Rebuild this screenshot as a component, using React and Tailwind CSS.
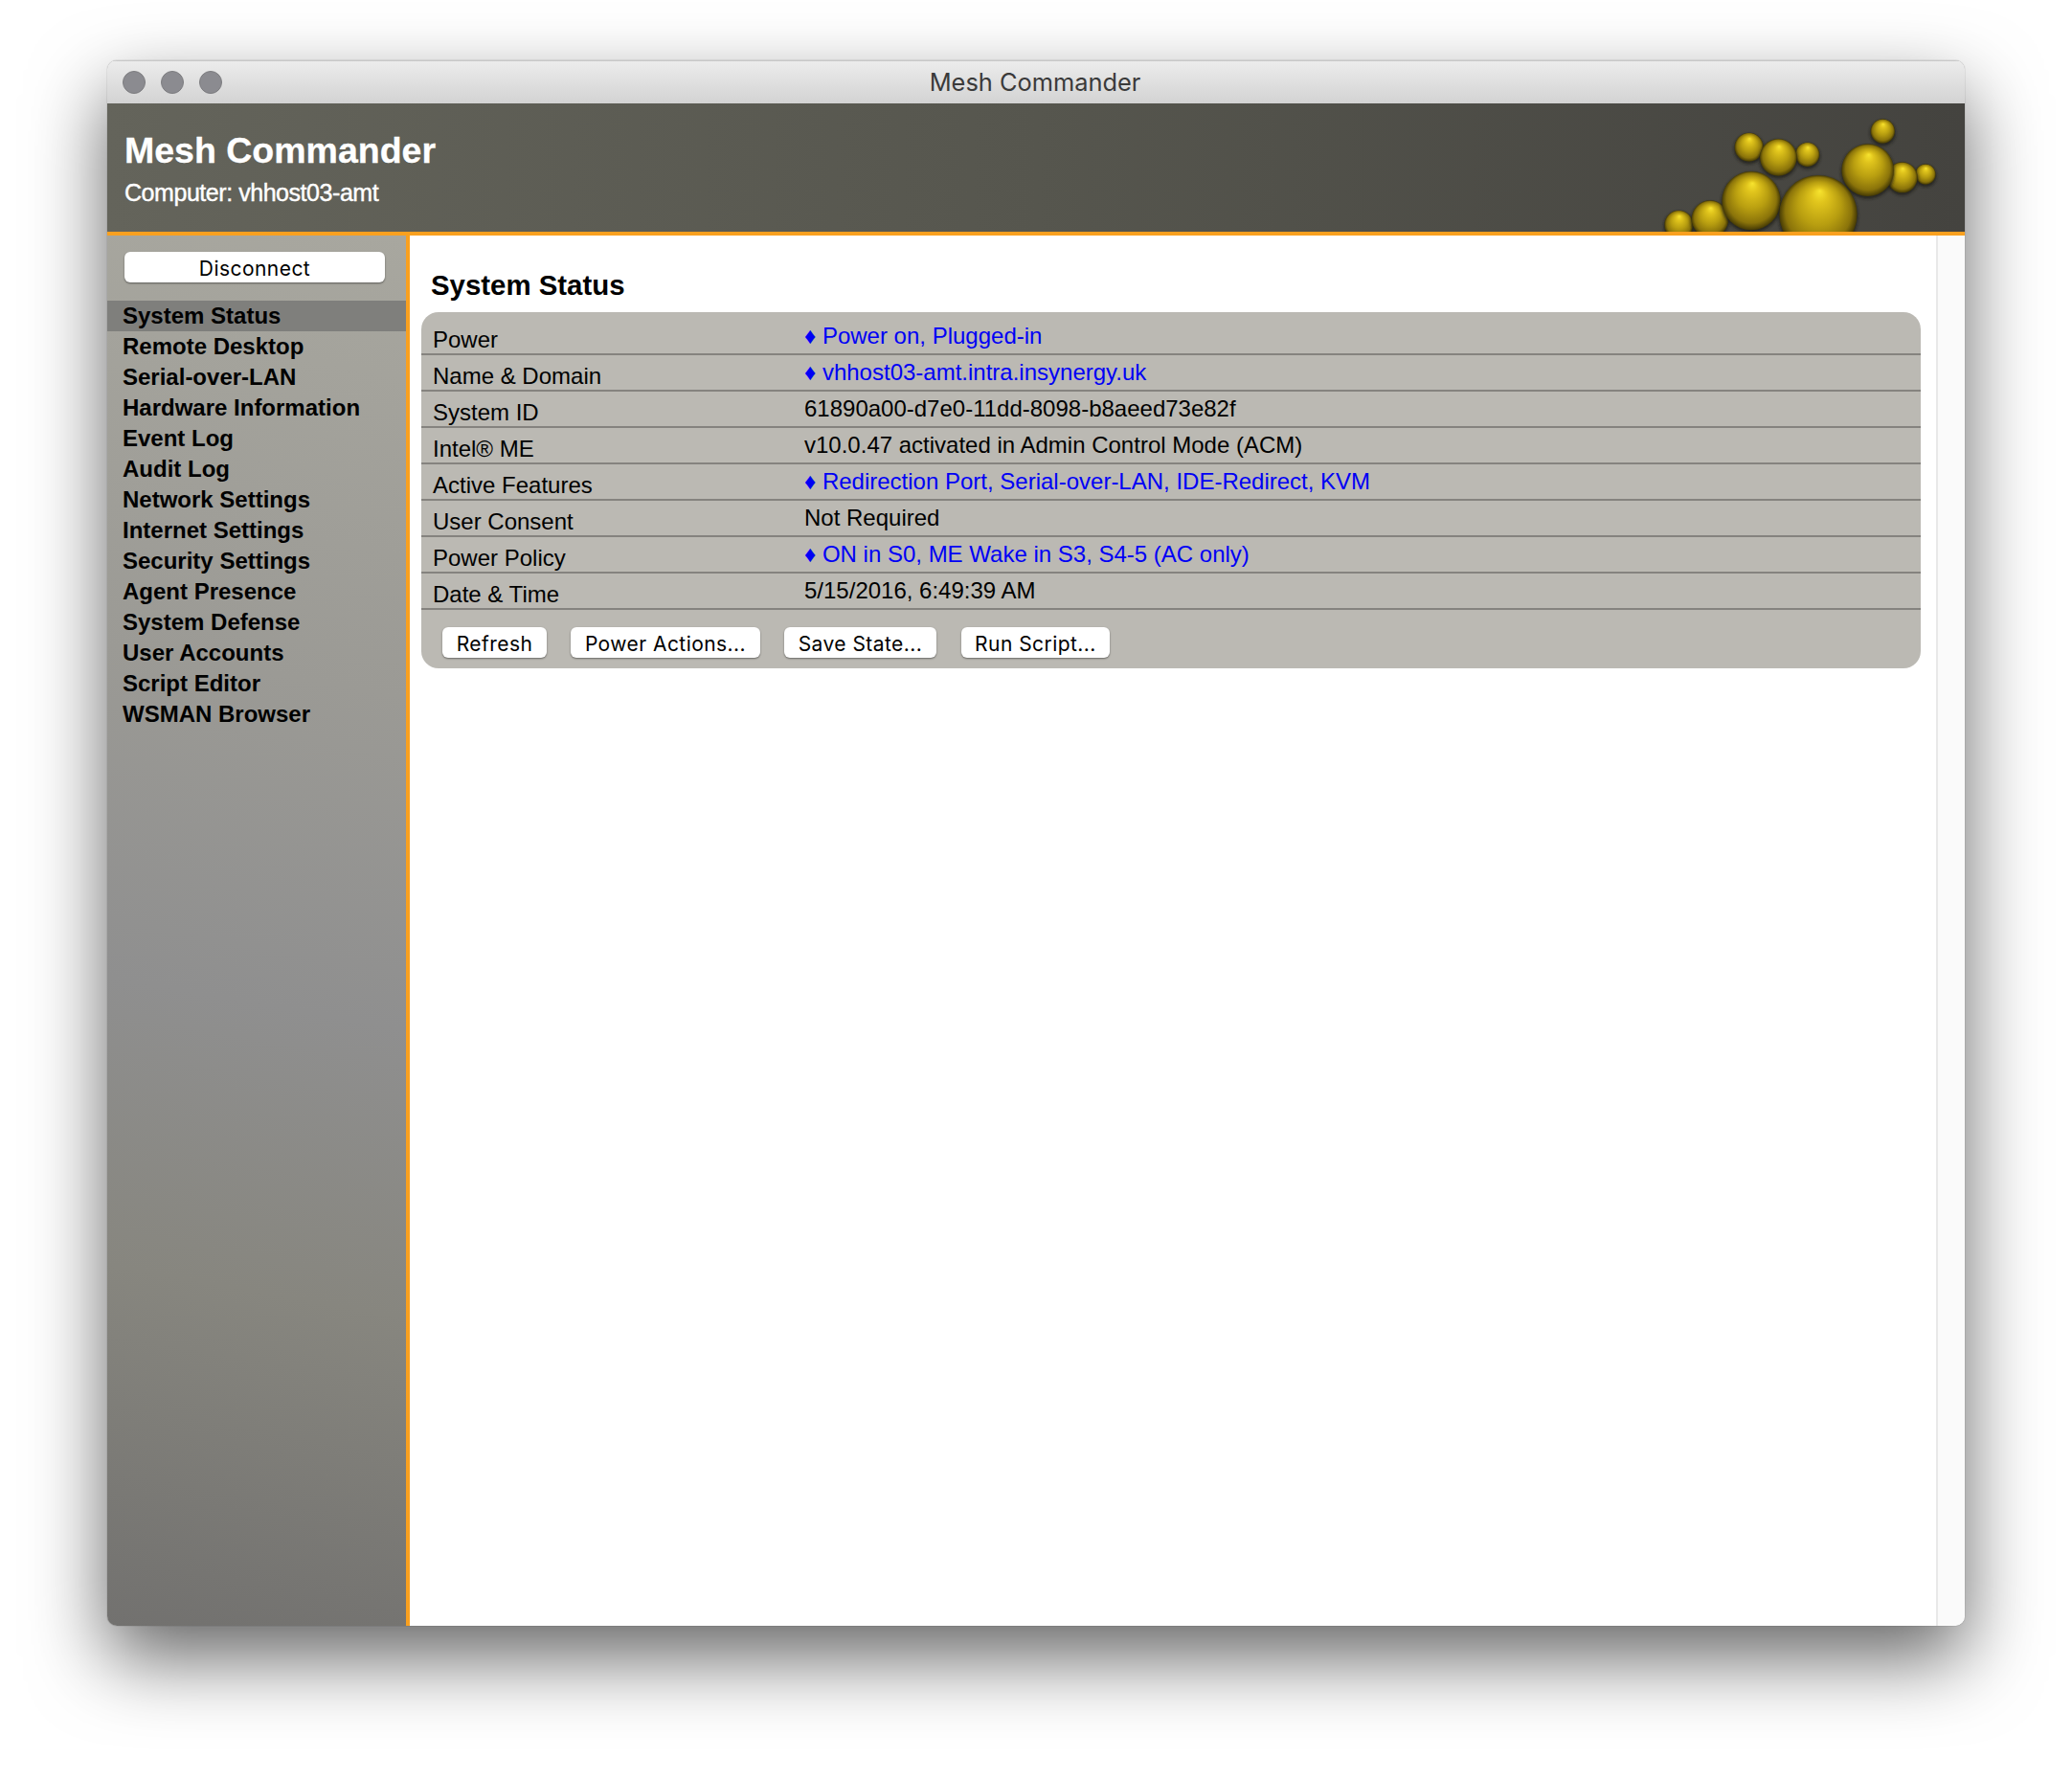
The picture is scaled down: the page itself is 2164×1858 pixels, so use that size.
const menuItems = [
  'System Status',
  'Remote Desktop',
  'Serial-over-LAN',
  'Hardware Information',
  'Event Log',
  'Audit Log',
  'Network Settings',
  'Internet Settings',
  'Security Settings',
  'Agent Presence',
  'System Defense',
  'User Accounts',
  'Script Editor',
  'WSMAN Browser',
];

const statusRows = [
  { label: 'Power', value: 'Power on, Plugged-in', link: true },
  { label: 'Name & Domain', value: 'vhhost03-amt.intra.insynergy.uk', link: true },
  { label: 'System ID', value: '61890a00-d7e0-11dd-8098-b8aeed73e82f' },
  { label: 'Intel® ME', value: 'v10.0.47 activated in Admin Control Mode (ACM)' },
  { label: 'Active Features', value: 'Redirection Port, Serial-over-LAN, IDE-Redirect, KVM', link: true },
  { label: 'User Consent', value: 'Not Required' },
  { label: 'Power Policy', value: 'ON in S0, ME Wake in S3, S4-5 (AC only)', link: true },
  { label: 'Date & Time', value: '5/15/2016, 6:49:39 AM' },
];

const balls = [
  [160, 553, 45],
  [258, 535, 58],
  [380, 310, 45],
  [563, 333, 38],
  [472, 342, 58],
  [387, 478, 92],
  [799, 260, 38],
  [933, 395, 32],
  [860, 405, 48],
  [752, 382, 82],
  [597, 520, 122],
];

const Logo = () => (
  <svg className="absolute right-0 bottom-0 w-[352px] h-[134px]" viewBox="0 173 1056 402">
    <defs>
      <radialGradient id="ball" cx="0.5" cy="0.5" r="0.5" fx="0.52" fy="0.2">
        <stop offset="0" stopColor="#f7e42f" />
        <stop offset="0.2" stopColor="#e0c41c" />
        <stop offset="0.55" stopColor="#b89e10" />
        <stop offset="0.85" stopColor="#8a730a" />
        <stop offset="1" stopColor="#453a05" />
      </radialGradient>
      <filter id="halo" x="-30%" y="-30%" width="160%" height="160%">
        <feGaussianBlur stdDeviation="5" />
      </filter>
    </defs>
    {balls.map(([cx, cy, r]) => (
      <g key={`${cx}-${cy}`}>
        <circle cx={cx} cy={cy + 6} r={r + 2} fill="#1d1b12" opacity="0.75" filter="url(#halo)" />
        <circle cx={cx} cy={cy} r={r} fill="url(#ball)" />
      </g>
    ))}
  </svg>
);

const MacButton = ({ children, className }) => (
  <button
    className={`h-[32px] pt-[2px] bg-white rounded-[6px] text-black text-[21px] tracking-[0.45px] font-['Inter','Liberation_Sans',sans-serif] shadow-[0_1px_2px_rgba(0,0,0,0.45)] ${className}`}
  >
    {children}
  </button>
);

export default function App() {
  return (
    <div className="w-[2164px] h-[1858px] bg-white pt-[63px] pl-[112px] overflow-hidden font-['Liberation_Sans',Arial,sans-serif]">
      <div className="w-[1940px] h-[1635px] flex flex-col rounded-[10px] overflow-hidden shadow-[0_0_1px_rgba(0,0,0,0.6),0_34px_80px_rgba(0,0,0,0.6)]">
        {/* titlebar */}
        <div className="relative h-[45px] flex items-center justify-center bg-gradient-to-b from-[#ececec] to-[#d3d3d3] border-t border-[#c8c8c8]">
          <div className="absolute left-[16px] top-[10px] flex gap-[16px]">
            <span className="w-[24px] h-[24px] rounded-full bg-[#8b8b90] border border-[#7d7d80]" />
            <span className="w-[24px] h-[24px] rounded-full bg-[#8b8b90] border border-[#7d7d80]" />
            <span className="w-[24px] h-[24px] rounded-full bg-[#8b8b90] border border-[#7d7d80]" />
          </div>
          <span className="text-[25.4px] text-[#3a3a3a] font-['Inter','Liberation_Sans',sans-serif] ml-[-2px]">Mesh Commander</span>
        </div>

        {/* banner */}
        <div className="relative h-[138px] shrink-0 border-b-4 border-[#f9a01f] bg-gradient-to-r from-[#64645b] via-[#56564e] to-[#44433f] pl-[18px] text-white overflow-hidden">
          <div className="text-[37.5px] leading-[46px] font-bold mt-[26px] [-webkit-text-stroke:0.3px_white]">Mesh Commander</div>
          <div className="text-[25px] leading-[30px] mt-[6px] tracking-[-0.45px] [-webkit-text-stroke:0.4px_white]">Computer: vhhost03-amt</div>
          <Logo />
        </div>

        <div className="flex-1 flex min-h-0">
          {/* sidebar */}
          <aside className="w-[316px] shrink-0 border-r-4 border-[#f9a01f] bg-[linear-gradient(190deg,#a8a79f_0%,#9b9a95_32%,#8f8f8f_55%,#87867f_75%,#72716f_100%)] pt-[17px]">
            <MacButton className="block ml-[18px] w-[272px]">Disconnect</MacButton>
            <nav className="mt-[19px]">
              {menuItems.map((item, index) => (
                <div
                  key={item}
                  className={`h-[32px] leading-[31px] pl-[16px] text-[24px] font-bold text-black ${index === 0 ? 'bg-[#7f7f7c]' : ''}`}
                >
                  {item}
                </div>
              ))}
            </nav>
          </aside>

          {/* content */}
          <main className="flex-1 bg-white pl-[12px] pr-[16px]">
            <h1 className="text-[29.4px] leading-[34px] font-bold text-black pl-[10px] pt-[35px] mb-[11px]">System Status</h1>
            <div className="bg-[#bbb9b3] rounded-[18px] pt-[7px] pb-[11px]">
              {statusRows.map((row) => (
                <div key={row.label} className="h-[38px] flex border-b-2 border-[#85837f] text-[24px] text-black">
                  <div className="w-[400px] pl-[12px] leading-[31px] pt-[6px]">{row.label}</div>
                  <div className={`leading-[30px] pt-[3px] ${row.link ? 'text-[#0000f5]' : ''}`}>
                    {row.link ? '♦ ' : ''}{row.value}
                  </div>
                </div>
              ))}
              <div className="flex pl-[22px] pt-[18px]">
                <MacButton className="w-[109px]">Refresh</MacButton>
                <MacButton className="w-[198px] ml-[25px]">Power Actions...</MacButton>
                <MacButton className="w-[159px] ml-[25px]">Save State...</MacButton>
                <MacButton className="w-[155px] ml-[26px]">Run Script...</MacButton>
              </div>
            </div>
          </main>

          {/* empty scrollbar track */}
          <div className="w-[30px] shrink-0 bg-[#fafafa] border-l-2 border-[#e8e8e8]" />
        </div>
      </div>
    </div>
  );
}
